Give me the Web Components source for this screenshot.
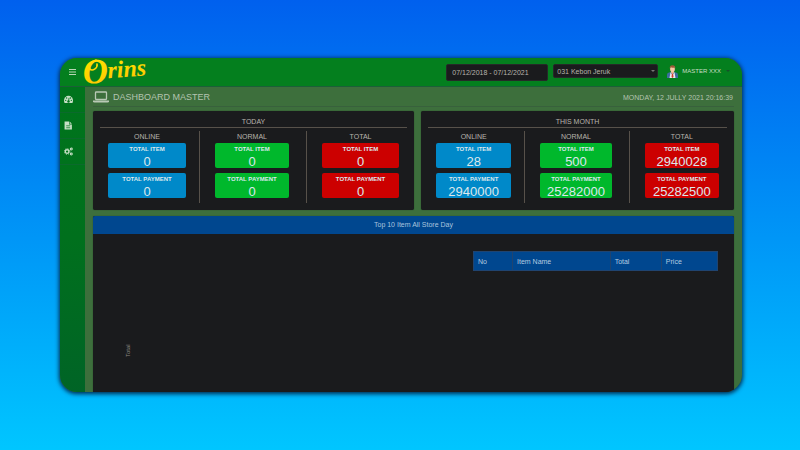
<!DOCTYPE html>
<html lang="en">
<head>
<meta charset="utf-8">
<title>Orins Dashboard</title>
<style>
html, body { margin: 0; }
body { font-family: "Liberation Sans", Arial, sans-serif; background: linear-gradient(#0060ee, #00c6ff); color: #b8b4ac; }
</style>
</head>
<body>
<dashboard-page></dashboard-page>
<script>
const define = (name, html, setup) => customElements.define(name, class extends HTMLElement {
  constructor() {
    super();
    const t = document.createElement('template');
    t.innerHTML = '<style>*{box-sizing:border-box}:host{box-sizing:border-box}</style>' + html;
    this.attachShadow({ mode: 'open' }).append(t.content.cloneNode(true));
  }
  connectedCallback() { if (setup) setup(this, this.shadowRoot); }
});

define('brand-logo', `
<style>
:host { display: block; width: 64px; height: 28px; }
a { display: block; color: #ffd800; text-decoration: none; }
svg { display: block; width: 64px; height: 28px; overflow: visible; }
text { font-family: "Liberation Serif", "Times New Roman", serif; font-style: italic; font-weight: bold; fill: url(#gold); }
</style>
<a href="#" aria-label="Orins home">
<svg viewBox="0 0 64 28">
  <defs><linearGradient id="gold" x1="0" y1="0" x2="0" y2="1"><stop offset="0" stop-color="#ffe600"/><stop offset="1" stop-color="#ffc400"/></linearGradient></defs>
  <g transform="rotate(-4 12 20)">
    <text x="-1" y="25" font-size="35">O</text>
    <text x="24" y="21" font-size="24">rins</text>
  </g>
  <path d="M12 2C7 3 4 8 6 11C8 14 14 10 13 6" fill="none" stroke="#ffdc00" stroke-width="1.600" stroke-linecap="round"/>
</svg></a>`);

define('top-bar', `
<style>
:host { display: flex; align-items: center; height: 29px; padding: 0 12px 0 9px; background: #047f1e; border-bottom: 1px solid #1c5f38; border-radius: 17px 17px 0 0; }
button { border: 0; padding: 0; background: none; color: inherit; font: inherit; display: flex; align-items: center; }
.menu { width: 7px; height: 12px; }
.menu svg { width: 7px; height: 6px; display: block; }
brand-logo { margin-left: 8px; margin-right: auto; }
input, select { border: 1px solid #252a28; border-radius: 2px; background: #1a1b1d; color: #b8b4ac; font: 7px "Liberation Sans", Arial, sans-serif; margin: 0; }
input { width: 102px; height: 17px; padding: 0 5px; }
.pick { position: relative; margin-left: 5px; margin-bottom: 2px; display: flex; }
select { appearance: none; width: 105px; height: 14px; padding: 0 3px; }
.pick svg { position: absolute; right: 3px; top: 6px; width: 4px; height: 2px; }
.user { margin-left: 9px; margin-bottom: 2px; font-size: 6px; color: #c8dcc4; gap: 4px; }
.user .face { width: 11px; height: 13px; }
.user .caret { width: 4px; height: 2px; margin-left: 1px; }
</style>
<button class="menu" aria-label="Menu"><svg viewBox="0 0 7 6"><path d="M0 .5h7M0 3h7M0 5.500h7" stroke="#b9d6b5" stroke-width="1"/></svg></button>
<brand-logo></brand-logo>
<input aria-label="Date range" value="07/12/2018 - 07/12/2021">
<div class="pick"><select aria-label="Store"><option>031 Kebon Jeruk</option></select><svg viewBox="0 0 4 2"><path d="M0 0h4L2 2z" fill="#777"/></svg></div>
<button class="user">
<svg class="face" viewBox="0 0 11 13">
<path d="M0 13V9.500Q0 8 2 7.500L4 7h3l2 .5Q11 8 11 9.500V13z" fill="#3d6d9e"/>
<path d="M3.500 7.300L5.500 10l2-2.700L8.500 13h-6z" fill="#eee"/>
<path d="M5 8h1l.5 4-1 1-1-1z" fill="#d33b32"/>
<path d="M4 5.500h3v2L5.500 9 4 7.500z" fill="#e5b18b"/>
<ellipse cx="5.500" cy="4" rx="2.400" ry="3" fill="#f4c9a5"/>
<path d="M2.900 4Q2 .4 5.500.2Q9 .4 8.100 4L7.600 2.500Q5 3 3.500 2.300z" fill="#9b5b38"/>
</svg><span>MASTER XXX</span><svg class="caret" viewBox="0 0 4 2"><path d="M0 0h4L2 2z" fill="#17502a"/></svg></button>`);

define('side-bar', `
<style>
:host { display: block; background: linear-gradient(#00741c, #00701d 50%, #006426); border-radius: 0 0 0 17px; }
nav { display: flex; flex-direction: column; }
a { display: flex; align-items: center; height: 26px; padding-left: 4px; border-bottom: 1px solid #0b6a2c; }
svg { width: 9px; height: 9px; display: block; }
</style>
<nav>
<a href="#" aria-label="Dashboard"><svg viewBox="0 0 16 16"><path d="M0 9.500a8 8 0 0 1 16 0q0 3-1 4.500H1Q0 12 0 9.500z" fill="#c6dfc5"/><g fill="#00741c"><circle cx="3" cy="9.500" r="1.200"/><circle cx="4.700" cy="5.400" r="1.200"/><circle cx="11.500" cy="5.400" r="1.200"/><circle cx="13" cy="9.500" r="1.200"/><circle cx="8" cy="11.500" r="2.200"/></g><path d="M8 11.500L9 5" stroke="#00741c" stroke-width="1.500"/></svg></a>
<a href="#" aria-label="Reports"><svg viewBox="0 0 16 16"><path d="M1 1h8v5h5v9H1z" fill="#c6dfc5"/><path d="M10 1l4 4h-4z" fill="#c6dfc5"/><path d="M4 8.500h7M4 12h7" stroke="#00741c" stroke-width="1.300"/></svg></a>
<a href="#" aria-label="Settings"><svg viewBox="0 0 16 16"><g fill="none" stroke="#c6dfc5"><circle cx="5.500" cy="8" r="3.200" stroke-width="2.400"/><circle cx="5.500" cy="8" r="5" stroke-width="1.600" stroke-dasharray="2 1.930"/><circle cx="13" cy="3.500" r="1.700" stroke-width="1.900"/><circle cx="13" cy="12.500" r="1.700" stroke-width="1.900"/></g></svg></a>
</nav>`);

define('page-title', `
<style>
:host { display: flex; align-items: center; height: 20px; border-bottom: 1px solid #38613c; padding: 0 1px 0 0; color: #b4c4b0; }
svg { width: 16px; height: 12px; margin-right: 4px; }
h1 { margin: 0 auto 0 0; font-size: 9px; font-weight: normal; line-height: 18px; }
time { font-size: 7px; padding-top: 2px; }
</style>
<svg viewBox="0 0 16 12"><rect x="2.500" y="1" width="11" height="7.500" rx=".8" fill="none" stroke="#b9c9b5" stroke-width="1.300"/><path d="M0 9.500h16v.7q0 1.300-1.500 1.300h-13Q0 11.500 0 10.200z" fill="#b9c9b5"/></svg>
<h1><slot></slot></h1><time><slot name="time"></slot></time>`);

define('stat-tile', `
<style>
:host { display: block; height: 25px; border-radius: 2px; background: var(--tone); color: #dce8ec; text-align: center; white-space: nowrap; }
b { display: block; font-size: 6px; line-height: 7px; padding-top: 3px; }
span { display: block; font-size: 13px; line-height: 13px; padding-top: 2px; }
</style>
<b></b><span><slot></slot></span>`, (el, r) => { r.querySelector('b').textContent = el.getAttribute('label'); });

define('stat-card', `
<style>
:host { display: block; background: #1a1b1d; border-radius: 2px; padding: 5px 0 7px; box-shadow: 0 0 1px #14301a; }
h2, h3 { font-size: 7px; font-weight: normal; margin: 0; text-align: center; }
h2 { line-height: 11px; margin: 0 7px; border-bottom: 1px solid #57514a; }
.cols { display: grid; grid-template-columns: repeat(3, 1fr); margin-top: 3px; }
section { display: flex; flex-direction: column; gap: 5px; height: 72px; padding: 0 13px 0 15px; border-right: 1px solid #57514a; }
section:nth-child(2) { padding-right: 17px; }
section:last-child { border: 0; padding-right: 15px; }
h3 { line-height: 11px; margin-bottom: -4px; }
</style>
<h2></h2><div class="cols"></div>`, (el, r) => {
  r.querySelector('h2').textContent = el.getAttribute('heading');
  const v = el.getAttribute('values').split(' ');
  r.querySelector('.cols').innerHTML = [['ONLINE', '#0089c9'], ['NORMAL', '#00b82c'], ['TOTAL', '#cc0000']].map(([n, c], i) =>
    `<section style="--tone:${c}"><h3>${n}</h3><stat-tile label="TOTAL ITEM">${v[i * 2]}</stat-tile><stat-tile label="TOTAL PAYMENT">${v[i * 2 + 1]}</stat-tile></section>`).join('');
});

define('top-items', `
<style>
:host { display: flex; flex-direction: column; flex: 1; background: #1a1b1d; border-radius: 2px 2px 0 0; overflow: hidden; box-shadow: 0 0 1px #14301a; }
h2 { margin: 0; background: #00478f; color: #a9c4de; font-size: 7px; font-weight: normal; line-height: 18px; text-align: center; }
.body { display: grid; grid-template-columns: 380fr 261fr; padding-top: 17px; flex: 1; }
.chart { display: flex; padding: 91px 0 0 32px; }
.chart span { writing-mode: vertical-rl; transform: rotate(180deg); font-size: 6px; line-height: 7px; height: 15px; color: #8d8a84; }
.list { padding-right: 16px; }
table { width: 100%; border-collapse: collapse; table-layout: fixed; font-size: 7px; background: #00478f; color: #b4cbe0; }
th { height: 19px; padding: 0 0 0 4px; text-align: left; font-weight: normal; border: 1px solid #204470; }
</style>
<h2>Top 10 Item All Store Day</h2>
<div class="body"><div class="chart"><span>Total</span></div>
<div class="list"><table><colgroup><col style="width:16%"><col style="width:40%"><col style="width:21%"><col style="width:23%"></colgroup><thead><tr><th>No</th><th>Item Name</th><th>Total</th><th>Price</th></tr></thead></table></div></div>`);

define('dashboard-page', `
<style>
:host { display: flex; min-height: 100vh; padding: 58px 58px 58px 60px; }
.window { flex: 1; display: flex; flex-direction: column; border-radius: 17px; background: #3d6f3c; box-shadow: 0 1px 4px 1px #002b50; }
.below { flex: 1; display: grid; grid-template-columns: 25px 1fr; }
main { display: flex; flex-direction: column; padding: 0 8px; border-radius: 0 0 17px 0; overflow: hidden; }
.cards { display: grid; grid-template-columns: 321fr 313fr; gap: 7px; margin: 4px 0 6px; }
</style>
<div class="window"><top-bar></top-bar>
<div class="below"><side-bar></side-bar>
<main><page-title>DASHBOARD MASTER<span slot="time">MONDAY, 12 JULLY 2021 20:16:39</span></page-title>
<div class="cards"><stat-card heading="TODAY" values="0 0 0 0 0 0"></stat-card><stat-card heading="THIS MONTH" values="28 2940000 500 25282000 2940028 25282500"></stat-card></div>
<top-items></top-items></main></div></div>`);
</script>
</body>
</html>
